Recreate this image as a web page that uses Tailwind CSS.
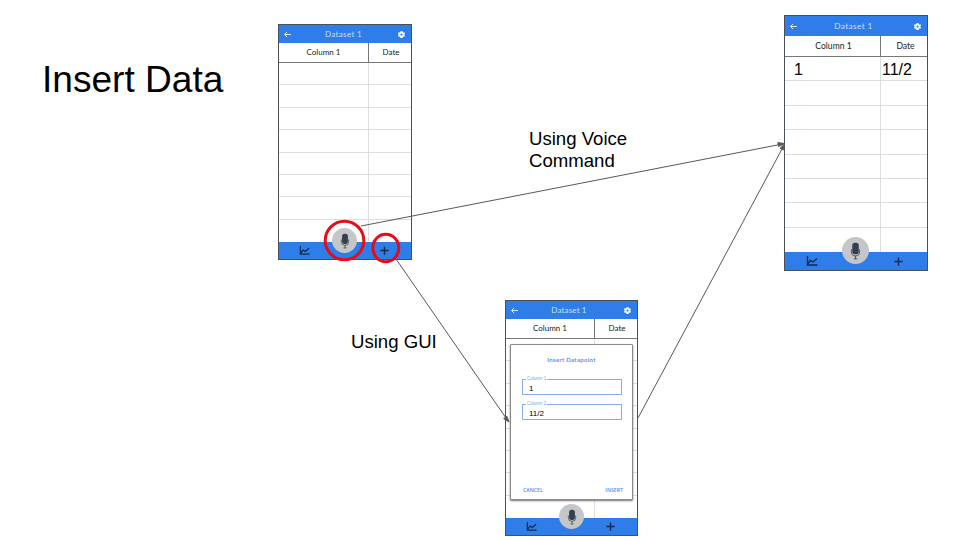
<!DOCTYPE html>
<html lang="en">
<head>
<meta charset="utf-8">
<title>Insert Data</title>
<script src="https://cdn.jsdelivr.net/npm/@tailwindcss/browser@4"></script>
</head>
<body class="bg-white">
<svg class="hidden">
  <symbol id="back" viewBox="0 0 24 24"><path d="M21 12H5M11 5l-7 7 7 7" fill="none" stroke="#e3eefd" stroke-width="2.600"/></symbol>
  <symbol id="gear" viewBox="0 0 24 24"><path fill="#fff" fill-rule="evenodd" d="M19.400 13c.1-.7.1-1.300 0-2l2.100-1.600-2-3.500-2.500 1c-.5-.4-1.100-.7-1.700-1L15 3H9l-.4 2.900c-.6.300-1.100.6-1.700 1l-2.500-1-2 3.500L4.600 11c-.1.700-.1 1.300 0 2l-2.200 1.600 2 3.500 2.500-1c.5.4 1.100.7 1.700 1L9 21h6l.3-2.900c.6-.3 1.200-.6 1.700-1l2.500 1 2-3.500zM12 15a3 3 0 1 1 0-6 3 3 0 0 1 0 6z"/></symbol>
  <symbol id="chart" viewBox="0 0 24 24"><path d="M3 2v18h20M4 17l5-6 5 3 8-7" fill="none" stroke="#102a50" stroke-width="2.800"/></symbol>
  <symbol id="plus" viewBox="0 0 24 24"><path d="M12 1v22M1 12h22" fill="none" stroke="#102a50" stroke-width="3.800"/></symbol>
  <symbol id="mic" viewBox="0 0 14 22"><rect x="3" y="1" width="8" height="14" rx="3.500" fill="#34414d"/><path d="M2 9v3a5 5 0 0 0 10 0V9M7 17v4M5 20.500h4" fill="none" stroke="#4b565f" stroke-width="1.200"/></symbol>
</svg>

<main class="relative h-[540px] w-[960px] overflow-hidden bg-white font-['Liberation_Sans',Arial,sans-serif] text-black">
  <h1 class="absolute left-[42px] top-[58px] whitespace-nowrap text-[37.100px] leading-[42px]">Insert Data</h1>
  <p class="absolute left-[529px] top-[128px] whitespace-nowrap text-[18.600px] leading-[22px]">Using Voice<br>Command</p>
  <p class="absolute left-[351px] top-[331px] whitespace-nowrap text-[18.600px] leading-[22px]">Using GUI</p>

  <!-- Empty dataset -->
  <section class="absolute left-[278px] top-[24px] flex h-[236px] w-[134px] flex-col border-[1.500px] border-[#4a5058] bg-white font-[Lato,sans-serif]">
    <header class="flex h-[18px] shrink-0 items-center justify-between bg-[#2f7de9] pl-[4px] pr-[5px]">
      <svg class="size-[9px]"><use href="#back"/></svg>
      <span class="mr-[2px] text-[8px] leading-none tracking-[0.350px] text-[#c9dffc]">Dataset 1</span>
      <svg class="size-[9px]"><use href="#gear"/></svg>
    </header>
    <div class="grid h-[20px] shrink-0 grid-cols-[90px_1fr] border-b border-[#777] text-center text-[8px] leading-[18px] text-[#222]">
      <span class="border-r border-[#777]">Column 1</span><span class="pl-[2px]">Date</span>
    </div>
    <div class="grid min-h-0 flex-1 grid-cols-[90px_1fr] grid-rows-8 *:border-[#dedede]">
      <i class="border-b border-r"></i><i class="border-b"></i><i class="border-b border-r"></i><i class="border-b"></i>
      <i class="border-b border-r"></i><i class="border-b"></i><i class="border-b border-r"></i><i class="border-b"></i>
      <i class="border-b border-r"></i><i class="border-b"></i><i class="border-b border-r"></i><i class="border-b"></i>
      <i class="border-b border-r"></i><i class="border-b"></i><i class="border-r"></i><i></i>
    </div>
    <footer class="relative flex h-[17px] shrink-0 items-center justify-between bg-[#2f7de9] pl-[20px] pr-[22px]">
      <svg class="size-[11px]"><use href="#chart"/></svg>
      <svg class="size-[9px]"><use href="#plus"/></svg>
      <div class="absolute left-[53px] top-[-14px] flex size-[25px] items-center justify-center rounded-full bg-[#c4c6c8]"><svg class="h-[16px] w-[12px]"><use href="#mic"/></svg></div>
    </footer>
  </section>

  <!-- Dataset with the new row -->
  <section class="absolute left-[784px] top-[15px] flex h-[256px] w-[144px] flex-col border-[1.500px] border-[#4a5058] bg-white font-[Lato,sans-serif]">
    <header class="flex h-[20px] shrink-0 items-center justify-between bg-[#2f7de9] pl-[4px] pr-[5px]">
      <svg class="size-[9px]"><use href="#back"/></svg>
      <span class="mr-[4px] text-[8.300px] leading-none tracking-[0.350px] text-[#c9dffc]">Dataset 1</span>
      <svg class="size-[9px]"><use href="#gear"/></svg>
    </header>
    <div class="grid h-[21px] shrink-0 grid-cols-[96px_1fr] border-b border-[#777] text-center text-[8.600px] leading-[21px] text-[#222]">
      <span class="border-r border-[#777] pl-[2px]">Column 1</span><span class="pl-[3px]">Date</span>
    </div>
    <div class="grid min-h-0 flex-1 grid-cols-[96px_1fr] grid-rows-[repeat(8,minmax(0,1fr))] font-['Liberation_Sans',Arial,sans-serif] text-[16px] leading-[25px] *:border-[#dedede]">
      <span class="h-full border-b border-r pl-[9px]">1</span><span class="h-full border-b pl-[1px]">11/2</span>
      <i class="border-b border-r"></i><i class="border-b"></i><i class="border-b border-r"></i><i class="border-b"></i>
      <i class="border-b border-r"></i><i class="border-b"></i><i class="border-b border-r"></i><i class="border-b"></i>
      <i class="border-b border-r"></i><i class="border-b"></i><i class="border-b border-r"></i><i class="border-b"></i>
      <i class="border-r"></i><i></i>
    </div>
    <footer class="relative flex h-[18px] shrink-0 items-center justify-between bg-[#2f7de9] pl-[21px] pr-[24px]">
      <svg class="size-[12px]"><use href="#chart"/></svg>
      <svg class="size-[9px]"><use href="#plus"/></svg>
      <div class="absolute left-[57px] top-[-15px] flex size-[27px] items-center justify-center rounded-full bg-[#c4c6c8]"><svg class="h-[18px] w-[13px]"><use href="#mic"/></svg></div>
    </footer>
  </section>

  <!-- Insert dialog -->
  <section class="absolute left-[505px] top-[300px] flex h-[236px] w-[133px] flex-col border-[1.500px] border-[#4a5058] bg-white font-[Lato,sans-serif]">
    <header class="flex h-[18px] shrink-0 items-center justify-between bg-[#2f7de9] pl-[4px] pr-[5px]">
      <svg class="size-[9px]"><use href="#back"/></svg>
      <span class="mr-[4px] text-[8px] leading-none tracking-[0.150px] text-[#c9dffc]">Dataset 1</span>
      <svg class="size-[9px]"><use href="#gear"/></svg>
    </header>
    <div class="grid h-[20px] shrink-0 grid-cols-[89px_1fr] border-b border-[#777] text-center text-[8px] leading-[19px] text-[#222]">
      <span class="border-r border-[#777]">Column 1</span><span class="pl-[2px]">Date</span>
    </div>
    <div class="grid min-h-0 flex-1 grid-cols-[89px_1fr] grid-rows-8 *:border-[#dedede]">
      <i class="border-b border-r"></i><i class="border-b"></i><i class="border-b border-r"></i><i class="border-b"></i>
      <i class="border-b border-r"></i><i class="border-b"></i><i class="border-b border-r"></i><i class="border-b"></i>
      <i class="border-b border-r"></i><i class="border-b"></i><i class="border-b border-r"></i><i class="border-b"></i>
      <i class="border-b border-r"></i><i class="border-b"></i><i class="border-r"></i><i></i>
    </div>
    <footer class="relative flex h-[17px] shrink-0 items-center justify-between bg-[#2f7de9] pl-[20px] pr-[22px]">
      <svg class="size-[11px]"><use href="#chart"/></svg>
      <svg class="size-[9px]"><use href="#plus"/></svg>
      <div class="absolute left-[53px] top-[-14px] flex size-[25px] items-center justify-center rounded-full bg-[#c4c6c8]"><svg class="h-[16px] w-[12px]"><use href="#mic"/></svg></div>
    </footer>
    <div class="absolute left-[4px] top-[43px] flex h-[156px] w-[123px] flex-col rounded-[1px] border border-[#8a8a8a] bg-white px-[11px] shadow-[0_1px_2px_#777]">
      <h2 class="mt-[11px] text-center text-[6px] font-bold leading-[8px] tracking-[0.300px] text-[#5a92ee]">Insert Datapoint</h2>
      <div class="relative mt-[15px] h-[16px] w-[100px] shrink-0 border border-[#82afe8] pl-[6px] font-['Liberation_Sans',Arial,sans-serif] text-[8px] leading-[17px]">1<span class="absolute left-[3px] top-[-4px] bg-white px-[1px] text-[4.500px] leading-[6px] text-[#78a5ea]">Column 1</span></div>
      <div class="relative mt-[9px] h-[16px] w-[100px] shrink-0 border border-[#82afe8] pl-[6px] font-['Liberation_Sans',Arial,sans-serif] text-[8px] leading-[17px]">11/2<span class="absolute left-[3px] top-[-4px] bg-white px-[1px] text-[4.500px] leading-[6px] text-[#78a5ea]">Column 2</span></div>
      <div class="-mr-[2px] mb-[5px] mt-auto flex justify-between pl-[1px] font-['Open_Sans',sans-serif] text-[5.200px] font-semibold leading-[7px] text-[#4f8bec]"><span>CANCEL</span><span>INSERT</span></div>
    </div>
  </section>

  <!-- Flow arrows and highlighted controls -->
  <svg class="absolute inset-0" width="960" height="540" viewBox="0 0 960 540" fill="none">
    <g stroke="#595959" stroke-width="1">
      <path d="M361 226L780 144.500M396 259L506 418M638 418L782 149"/>
      <g fill="#595959"><path d="M784.500 143.500L778.500 146.500 777.800 142.600zM509 422L503.700 418.600 506.900 416.300zM784.500 144L783.600 150 780.100 148.200z"/></g>
    </g>
    <g stroke="#e80c14" stroke-width="3"><ellipse cx="344.500" cy="240.500" rx="19.300" ry="19.300"/><ellipse cx="385.800" cy="248" rx="13" ry="13.700"/></g>
  </svg>
</main>
</body>
</html>
